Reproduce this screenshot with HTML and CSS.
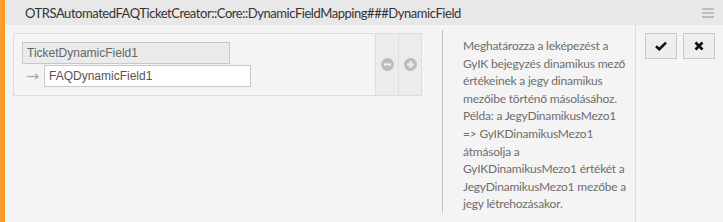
FILE: index.html
```html
<!DOCTYPE html>
<html lang="hu">
<head>
<meta charset="utf-8">
<title>DynamicFieldMapping</title>
<link rel="stylesheet" href="styles.css">
</head>
<body>
<div class="page">
  <div class="accent"></div>
  <div class="panel">
    <div class="header">
      <span class="title">OTRSAutomatedFAQTicketCreator::Core::DynamicFieldMapping###DynamicField</span>
      <span class="menu"><i></i><i></i><i></i></span>
    </div>
    <div class="content">
      <div class="main">
        <div class="mapping">
          <div class="fields">
            <div class="input key">TicketDynamicField1</div>
            <div class="value-row">
              <span class="arrow"><svg width="12" height="7" viewBox="0 0 12 7"><path d="M0 3.5H10" stroke="#aaa" stroke-width="1.4"/><path d="M8 1 L11.5 3.5 L8 6" fill="none" stroke="#aaa" stroke-width="1.2"/></svg></span>
              <div class="input value">FAQDynamicField1</div>
            </div>
          </div>
          <div class="ctrl"><svg width="13" height="13" viewBox="0 0 13 13"><circle cx="6.5" cy="6.5" r="6.5" fill="#bcbcbc"/><rect x="3" y="5.3" width="7" height="2.4" fill="#ececec"/></svg></div>
          <div class="ctrl"><svg width="13" height="13" viewBox="0 0 13 13"><circle cx="6.5" cy="6.5" r="6.5" fill="#bcbcbc"/><rect x="3" y="5.3" width="7" height="2.4" fill="#ececec"/><rect x="5.3" y="3" width="2.4" height="7" fill="#ececec"/></svg></div>
        </div>
        <div class="desc">Meghatározza a leképezést a<br>GyIK bejegyzés dinamikus mező<br>értékeinek a jegy dinamikus<br>mezőibe történő másolásához.<br>Példa: a JegyDinamikusMezo1<br>=&gt; GyIKDinamikusMezo1<br>átmásolja a<br>GyIKDinamikusMezo1 értékét a<br>JegyDinamikusMezo1 mezőbe a<br>jegy létrehozásakor.</div>
      </div>
      <div class="actions">
        <button class="btn" type="button"><svg width="12" height="10" viewBox="0 0 12 10"><path d="M1 5.2 L4.3 8.2 L11 1.6" fill="none" stroke="#111" stroke-width="2.6"/></svg></button>
        <button class="btn" type="button"><svg width="10" height="10" viewBox="0 0 10 10"><path d="M1.5 1.5 L8.5 8.5 M8.5 1.5 L1.5 8.5" fill="none" stroke="#111" stroke-width="2.8"/></svg></button>
      </div>
    </div>
  </div>
</div>
</body>
</html>
```
FILE: styles.css
```css
html, body {
  margin: 0;
  padding: 0;
  background: #f4f4f4;
}
.page {
  display: flex;
  height: 222px;
  overflow: hidden;
}
.accent {
  width: 5px;
  flex: 0 0 5px;
  background: #ff9c27;
}
.panel {
  flex: 1;
  display: flex;
  flex-direction: column;
}
.header {
  height: 25px;
  flex: 0 0 25px;
  background: #e8e8e8;
  display: flex;
  align-items: center;
  justify-content: space-between;
  padding: 0 9px 0 20px;
}
.title {
  font-family: Lato, "Liberation Sans", sans-serif;
  font-size: 13px;
  letter-spacing: -0.45px;
  color: #333;
  white-space: nowrap;
}
.menu {
  display: flex;
  flex-direction: column;
  gap: 2px;
  margin-top: 1px;
}
.menu i {
  display: block;
  width: 12px;
  height: 2px;
  background: #bdbdbd;
}
.content {
  flex: 1;
  display: flex;
}
.main {
  width: 631px;
  flex: 0 0 631px;
  border-right: 1px solid #dcdcdc;
  display: flex;
  align-items: flex-start;
  padding: 8px 0 0 8px;
  box-sizing: border-box;
}
.mapping {
  display: flex;
  width: 409px;
  flex: 0 0 409px;
  box-sizing: border-box;
  border: 1px solid #dcdcdc;
}
.fields {
  flex: 1;
  padding: 8px 0 8px 8px;
}
.input {
  font-family: "Liberation Sans", Arial, sans-serif;
  font-size: 12px;
  height: 22px;
  line-height: 20px;
  box-sizing: border-box;
  padding: 0 4px;
  white-space: nowrap;
}
.key {
  width: 208px;
  background: #ebebeb;
  border: 1px solid #c8c8c8;
  color: #666;
}
.value-row {
  display: flex;
  align-items: center;
  margin-top: 1px;
}
.arrow {
  width: 22px;
  display: flex;
  padding-left: 5px;
  box-sizing: border-box;
}
.value {
  width: 207px;
  background: #fff;
  border: 1px solid #c8c8c8;
  color: #555;
}
.ctrl {
  width: 23px;
  flex: 0 0 23px;
  box-sizing: border-box;
  border-left: 1px solid #dcdcdc;
  background: #ececec;
  display: flex;
  align-items: center;
  justify-content: center;
}
.desc {
  flex: 1;
  margin: -3px 0 0 20px;
  border-left: 1px solid #c4c4c4;
  padding: 7px 10px 0 20px;
  height: 176px;
  font-family: Lato, "Liberation Sans", sans-serif;
  font-size: 12px;
  letter-spacing: -0.2px;
  line-height: 17.6px;
  color: #6e6e6e;
  white-space: nowrap;
}
.actions {
  flex: 1;
  display: flex;
  align-items: flex-start;
  gap: 6px;
  padding: 8px 0 0 9px;
}
.btn {
  width: 32px;
  height: 26px;
  margin: 0;
  padding: 0;
  background: #eeeeee;
  border: 1px solid #c8c8c8;
  display: flex;
  align-items: center;
  justify-content: center;
}
```
